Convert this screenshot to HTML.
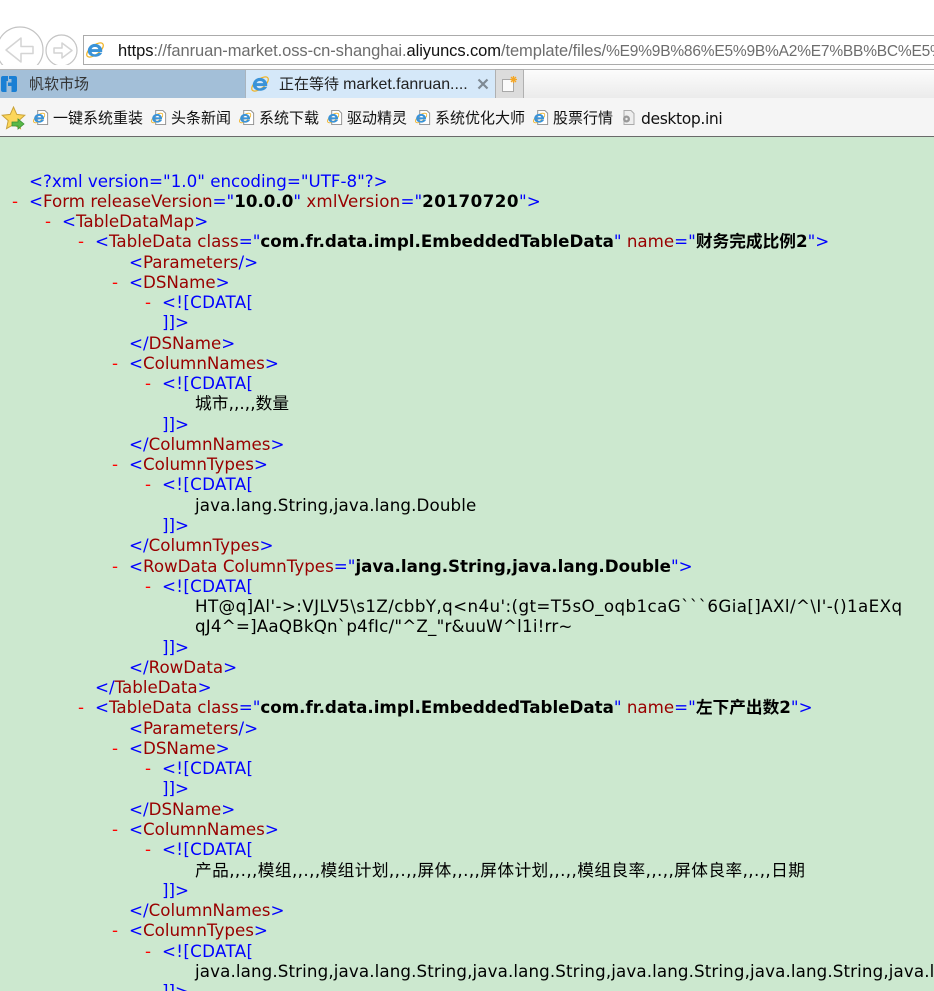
<!DOCTYPE html>
<html lang="zh"><head><meta charset="utf-8"><title>market.fanruan</title>
<style>
html,body{margin:0;padding:0;width:934px;height:991px;overflow:hidden;background:#fff}
body{position:relative;font-family:"Liberation Sans","Noto Sans CJK SC",sans-serif}
.a{position:absolute}
#urlbar{left:83px;top:35px;height:28px;border:1px solid #ababab;border-right:0;background:#fff;box-sizing:content-box;width:850px}
#url{left:118px;top:41px;width:816px;overflow:hidden;font:16.5px/21px "Liberation Sans",sans-serif;color:#6d6d6d;white-space:nowrap;letter-spacing:-.08px}
#url b{font-weight:normal;color:#111}
#url i{font-style:normal;font-size:15.5px;letter-spacing:-.2px}
#tabs{left:0;top:65px;width:934px;height:33px;background:linear-gradient(#fff,#ebebeb)}
.t{white-space:nowrap;color:#222;font-size:15px;line-height:20px}
#fav{left:0;top:98px;width:934px;height:38px;background:#f5f5f5;border-bottom:1px solid #6a6a6a}
.f{top:109px;font-size:15px;line-height:20px;color:#111;white-space:nowrap}
#c{left:0;top:137px;width:934px;height:854px;background:#cce8cf;overflow:hidden}
#x{position:absolute;left:-1px;top:33.5px;width:935px;overflow:hidden;font:16.7px/20.28px "DejaVu Sans","Noto Sans CJK SC",sans-serif;color:#00f}
#x div{position:relative;white-space:nowrap;height:20.28px}
.d{position:absolute;margin-left:-17px;color:#f00}
.n{color:#900}.v{color:#000;font-weight:bold}.k{color:#000}
.cd{letter-spacing:.33px}
.i0{padding-left:30px}.i1{padding-left:63px}.i2{padding-left:96px}.i3{padding-left:130px}.i4{padding-left:163px}.i5{padding-left:196px}
</style></head><body>
<svg width="0" height="0" style="position:absolute"><defs>
<symbol id="ie" viewBox="0 0 20 20">
<ellipse cx="10" cy="10" rx="11" ry="5" transform="rotate(-38 10 10)" fill="none" stroke="#f0b428" stroke-width="1.400"/>
<path fill-rule="evenodd" d="M2 11a8 7.500 0 0 1 16-.5v1.700H6.300c.3 3 5.500 3.500 7.300.8h4.300c-2.500 6.500-15.900 6-15.900-2zM6.300 9h7.300c-.3-3.200-6.900-3.200-7.300 0z" fill="#3a93d8"/>
</symbol>
<symbol id="pg" viewBox="0 0 18 18">
<path d="M5 1.500h7.500l3 3v12H5z" fill="#fff" stroke="#8f8f8f"/>
<use href="#ie" x="0" y="3" width="13" height="13"/>
</symbol>
</defs></svg>

<svg class="a" style="left:0;top:26px" width="82" height="48" viewBox="0 0 82 48">
<circle cx="20" cy="24" r="23" fill="#fff" stroke="#c4c4c4" stroke-width="1.200"/>
<path d="M6 24l15-12v8.500h12v7H21V36z" fill="#fff" stroke="#d4d4d4" stroke-width="1.500" stroke-linejoin="round"/>
<circle cx="61.500" cy="24.500" r="15.500" fill="#fff" stroke="#c4c4c4" stroke-width="1.200"/>
<path d="M72 24.500l-10-7.500v5H54v5h8v5z" fill="#fff" stroke="#d4d4d4" stroke-width="1.500" stroke-linejoin="round"/>
</svg>
<div class="a" id="urlbar"></div>
<svg class="a" style="left:86px;top:41px" width="18" height="18"><use href="#ie" width="18" height="18"/></svg>
<div class="a" id="url"><b>https</b>://fanruan-market.oss-cn-shanghai.<b>aliyuncs.com</b>/template/files/<i>%E9%9B%86%E5%9B%A2%E7%BB%BC%E5%</i></div>

<div class="a" id="tabs"></div>
<div class="a" style="left:0;top:69px;width:934px;height:1px;background:#b5b5b5"></div>
<div class="a" style="left:0;top:70px;width:245px;height:28px;background:#a3bfd8"></div>
<div class="a" style="left:245px;top:70px;width:1px;height:28px;background:#a9b4be"></div>
<div class="a" style="left:246px;top:70px;width:249px;height:28px;background:#d5e8f9"></div>
<div class="a" style="left:495px;top:69px;width:27px;height:29px;background:#dcdcdc;border:1px solid #b0b0b0;border-bottom:0"></div>
<svg class="a" style="left:0;top:75px" width="18" height="18" viewBox="0 0 18 18">
<path d="M1 3q0-2 2-2h5v5H6.500v11H3q-2 0-2-2z" fill="#1a7fd4"/><path d="M9 1h6q2 0 2 2v12q0 2-2 2h-3.500v-6H8V7.500h3.500V4H9z" fill="#1a7fd4"/>
</svg>
<div class="a t" style="left:29px;top:75px;color:#333">帆软市场</div>
<svg class="a" style="left:251px;top:75px" width="18" height="18"><use href="#ie" width="18" height="18"/></svg>
<div class="a t" style="left:279px;top:75px">正在等待 <span style="font-size:15.9px">market.fanruan....</span></div>
<svg class="a" style="left:477px;top:78px" width="12" height="12" viewBox="0 0 12 12"><path d="M1.500 1.500l9 9M10.500 1.500l-9 9" stroke="#7f8a94" stroke-width="2.200"/></svg>
<svg class="a" style="left:502px;top:75px" width="16" height="17" viewBox="0 0 16 17">
<path d="M.5 4.500h9l2 2v10H.5z" fill="#fafafa" stroke="#a8a8a8"/>
<path d="M11.500 1v7M8 4.500h7M9 2l5 5M14 2L9 7" stroke="#f5a623" stroke-width="1.300"/>
</svg>

<div class="a" id="fav"></div>
<svg class="a" style="left:1px;top:106px" width="25" height="25" viewBox="0 0 25 25">
<path d="M12.500 1l3.300 7.400 8 .8-6 5.400 1.700 8-7-4-7 4 1.700-8-6-5.400 8-.8z" fill="#fcd65a" stroke="#c9a33a"/>
<path d="M11 16h6v-3l6 5-6 5v-3h-6z" fill="#58b947" stroke="#3a8f35" stroke-width=".8"/>
</svg>
<svg class="a" style="left:33px;top:109px" width="17" height="17"><use href="#pg" width="17" height="17"/></svg>
<div class="a f" style="left:53px">一键系统重装</div>
<svg class="a" style="left:151px;top:109px" width="17" height="17"><use href="#pg" width="17" height="17"/></svg>
<div class="a f" style="left:171px">头条新闻</div>
<svg class="a" style="left:239px;top:109px" width="17" height="17"><use href="#pg" width="17" height="17"/></svg>
<div class="a f" style="left:259px">系统下载</div>
<svg class="a" style="left:327px;top:109px" width="17" height="17"><use href="#pg" width="17" height="17"/></svg>
<div class="a f" style="left:347px">驱动精灵</div>
<svg class="a" style="left:415px;top:109px" width="17" height="17"><use href="#pg" width="17" height="17"/></svg>
<div class="a f" style="left:435px">系统优化大师</div>
<svg class="a" style="left:533px;top:109px" width="17" height="17"><use href="#pg" width="17" height="17"/></svg>
<div class="a f" style="left:553px">股票行情</div>
<svg class="a" style="left:620px;top:109px" width="17" height="17" viewBox="0 0 17 17"><path d="M4 1.500h7l3 3v11H4z" fill="#eee" stroke="#aaa"/><circle cx="6.500" cy="10" r="3.500" fill="#999"/><circle cx="6.500" cy="10" r="1.200" fill="#eee"/></svg>
<div class="a f" style="left:641px;font-size:15.6px;font-family:'DejaVu Sans',sans-serif;letter-spacing:-.4px">desktop.ini</div>

<div class="a" id="c"><div id="x">
<div class="i0">&lt;?xml version="1.0" encoding="UTF-8"?&gt;</div>
<div class="i0"><span class="d">-</span>&lt;<span class="n">Form releaseVersion</span>="<span class="v">10.0.0</span>" <span class="n" style="letter-spacing:.2px">xmlVersion</span>="<span class="v" style="letter-spacing:.5px">20170720</span>"&gt;</div>
<div class="i1"><span class="d">-</span>&lt;<span class="n">TableDataMap</span>&gt;</div>
<div class="i2"><span class="d">-</span>&lt;<span class="n">TableData class</span>="<span class="v">com.fr.data.impl.EmbeddedTableData</span>" <span class="n">name</span>="<span class="v">财务完成比例2</span>"&gt;</div>
<div class="i3">&lt;<span class="n">Parameters</span>/&gt;</div>
<div class="i3"><span class="d">-</span>&lt;<span class="n">DSName</span>&gt;</div>
<div class="i4 cd"><span class="d">-</span>&lt;![CDATA[</div>
<div class="i4">]]&gt;</div>
<div class="i3">&lt;/<span class="n">DSName</span>&gt;</div>
<div class="i3"><span class="d">-</span>&lt;<span class="n">ColumnNames</span>&gt;</div>
<div class="i4 cd"><span class="d">-</span>&lt;![CDATA[</div>
<div class="i5 k" style="letter-spacing:.1px">城市,,.,,数量</div>
<div class="i4">]]&gt;</div>
<div class="i3">&lt;/<span class="n">ColumnNames</span>&gt;</div>
<div class="i3"><span class="d">-</span>&lt;<span class="n">ColumnTypes</span>&gt;</div>
<div class="i4 cd"><span class="d">-</span>&lt;![CDATA[</div>
<div class="i5 k" style="letter-spacing:.12px">java.lang.String,java.lang.Double</div>
<div class="i4">]]&gt;</div>
<div class="i3">&lt;/<span class="n">ColumnTypes</span>&gt;</div>
<div class="i3"><span class="d">-</span>&lt;<span class="n">RowData ColumnTypes</span>="<span class="v">java.lang.String,java.lang.Double</span>"&gt;</div>
<div class="i4 cd"><span class="d">-</span>&lt;![CDATA[</div>
<div class="i5 k" style="letter-spacing:.41px">HT@q]Al'-&gt;:VJLV5\s1Z/cbbY,q&lt;n4u':(gt=T5sO_oqb1caG&#96;&#96;&#96;6Gia[]AXl/^\I'-()1aEXq</div>
<div class="i5 k" style="letter-spacing:.2px">qJ4^=]AaQBkQn&#96;p4fIc/"^Z_"r&amp;uuW^l1i!rr~</div>
<div class="i4">]]&gt;</div>
<div class="i3">&lt;/<span class="n">RowData</span>&gt;</div>
<div class="i2">&lt;/<span class="n">TableData</span>&gt;</div>
<div class="i2"><span class="d">-</span>&lt;<span class="n">TableData class</span>="<span class="v">com.fr.data.impl.EmbeddedTableData</span>" <span class="n">name</span>="<span class="v">左下产出数2</span>"&gt;</div>
<div class="i3">&lt;<span class="n">Parameters</span>/&gt;</div>
<div class="i3"><span class="d">-</span>&lt;<span class="n">DSName</span>&gt;</div>
<div class="i4 cd"><span class="d">-</span>&lt;![CDATA[</div>
<div class="i4">]]&gt;</div>
<div class="i3">&lt;/<span class="n">DSName</span>&gt;</div>
<div class="i3"><span class="d">-</span>&lt;<span class="n">ColumnNames</span>&gt;</div>
<div class="i4 cd"><span class="d">-</span>&lt;![CDATA[</div>
<div class="i5 k" style="letter-spacing:.41px">产品,,.,,模组,,.,,模组计划,,.,,屏体,,.,,屏体计划,,.,,模组良率,,.,,屏体良率,,.,,日期</div>
<div class="i4">]]&gt;</div>
<div class="i3">&lt;/<span class="n">ColumnNames</span>&gt;</div>
<div class="i3"><span class="d">-</span>&lt;<span class="n">ColumnTypes</span>&gt;</div>
<div class="i4 cd"><span class="d">-</span>&lt;![CDATA[</div>
<div class="i5 k" style="letter-spacing:.12px">java.lang.String,java.lang.String,java.lang.String,java.lang.String,java.lang.String,java.lang.String</div>
<div class="i4">]]&gt;</div>
</div></div>
</body></html>
